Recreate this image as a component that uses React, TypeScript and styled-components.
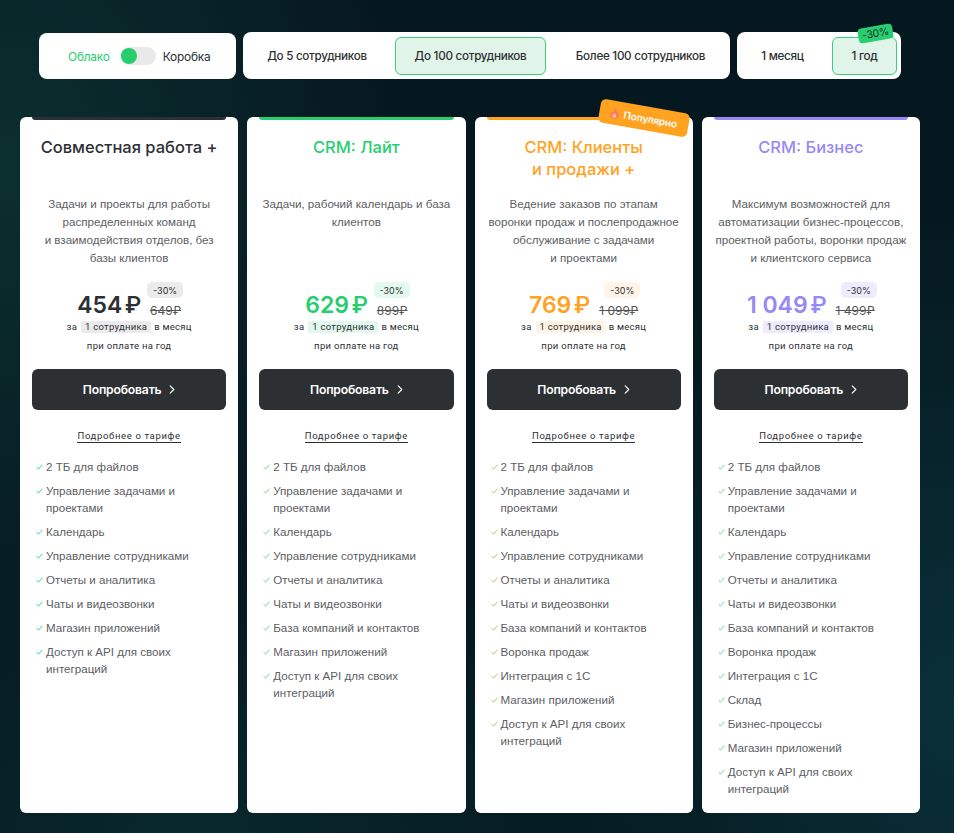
import React from "react";
import styled, { createGlobalStyle } from "styled-components";

const Global = createGlobalStyle`
  html, body { margin: 0; padding: 0; }
  body {
    min-height: 833px;
    overflow: hidden;
    font-family: Inter, "Noto Sans", sans-serif;
    background:
      radial-gradient(ellipse 420px 520px at 0% 20%, #0b2f2f 0%, rgba(11,47,47,0) 100%),
      radial-gradient(ellipse 420px 520px at 100% 85%, #0a3038 0%, rgba(10,48,56,0) 100%),
      radial-gradient(ellipse 500px 300px at 20% 100%, #08282c 0%, rgba(8,40,44,0) 100%),
      #05171f;
  }
`;

const Page = styled.div`
  width: 954px;
  height: 833px;
  box-sizing: border-box;
  padding: 32px 34px 20px 20px;
  display: flex;
  flex-direction: column;
  gap: 38px;
`;

const TopBar = styled.div`
  display: flex;
  justify-content: center;
  align-items: flex-end;
  gap: 7px;
`;

const Panel = styled.div`
  position: relative;
  background: #fff;
  border-radius: 8px;
  display: flex;
  align-items: center;
  height: 47px;
  box-sizing: border-box;
  padding: 0 4px 0 5px;
  gap: 9px;
`;

const HostPanel = styled(Panel)`
  height: 46px;
  width: 197px;
  padding: 0 0 0 29px;
  gap: 0;
`;

const HostLabel = styled.span<{ $on?: boolean }>`
  font-size: 11.9px;
  letter-spacing: -0.2px;
  color: ${(p) => (p.$on ? "#27ce70" : "#2c3033")};
`;

const Toggle = styled.span`
  width: 36px;
  height: 18px;
  margin: 0 7px 0 10px;
  border-radius: 9px;
  background: #e9e9e9;
  display: flex;
  align-items: center;
  padding-left: 1px;
  box-sizing: border-box;
`;

const Knob = styled.span`
  width: 16px;
  height: 16px;
  border-radius: 50%;
  background: #27ce70;
`;

const Tab = styled.div<{ $active?: boolean; $w?: number }>`
  position: relative;
  height: 38px;
  box-sizing: border-box;
  padding: 0 16px;
  width: ${(p) => p.$w}px;
  display: flex;
  align-items: center;
  justify-content: center;
  white-space: nowrap;
  border-radius: 6px;
  font-size: 11.7px;
  letter-spacing: -0.3px;
  font-weight: 500;
  color: #2c3033;
  border: 1px solid ${(p) => (p.$active ? "#38d07f" : "transparent")};
  background: ${(p) => (p.$active ? "#e1f4e9" : "transparent")};
`;

const SaleTag = styled.span`
  position: absolute;
  top: -12px;
  right: 3px;
  width: 35px;
  height: 15px;
  display: flex;
  align-items: center;
  justify-content: center;
  border-radius: 4px;
  background: #27ce70;
  color: #20302a;
  font-size: 10.5px;
  font-weight: 400;
  transform: rotate(-10deg);
`;

const Grid = styled.div`
  display: grid;
  grid-template-columns: repeat(4, 1fr);
  gap: 9px;
  width: 900px;
  height: 696px;
`;

const Card = styled.div`
  position: relative;
  background: #fff;
  border-radius: 6px;
  padding: 0 12px;
  box-sizing: border-box;
  display: flex;
  flex-direction: column;
  align-items: stretch;
`;

const Accent = styled.div<{ $color: string }>`
  height: 3px;
  background: ${(p) => p.$color};
  border-radius: 0 0 3px 3px;
`;

const Title = styled.h2<{ $color: string }>`
  margin: 17px -6px 0;
  height: 54px;
  font-size: 16.5px;
  line-height: 21.5px;
  font-weight: 500;
  text-align: center;
  color: ${(p) => p.$color};
  white-space: pre-line;
`;

const Desc = styled.p`
  margin: 4px -8px 0;
  height: 72px;
  font-family: "Liberation Sans", Arial, sans-serif;
  font-size: 11.6px;
  line-height: 18px;
  color: #5c6063;
  text-align: center;
  white-space: pre;
`;

const PriceRow = styled.div`
  margin-top: 15px;
  height: 36px;
  display: flex;
  justify-content: center;
  align-items: flex-end;
  gap: 9px;
`;

const Price = styled.span<{ $color: string }>`
  font-size: 23px;
  line-height: 32px;
  margin-bottom: -4px;
  font-weight: 600;
  white-space: nowrap;
  color: ${(p) => p.$color};
`;

const Ruble = styled.span`
  font-family: Roboto, sans-serif;
  font-size: 23px;
  font-weight: 500;
  margin-left: 3px;
`;

const Discount = styled.span<{ $bg: string }>`
  position: absolute;
  top: -21px;
  right: -2px;
  width: 36px;
  height: 16px;
  display: flex;
  align-items: center;
  justify-content: center;
  border-radius: 5px;
  font-size: 9px;
  color: #2c3033;
  background: ${(p) => p.$bg};
`;

const OldPrice = styled.span`
  position: relative;
  font-size: 12px;
  line-height: 15px;
  color: #555;
  white-space: nowrap;
`;

const OldValue = styled.span`
  text-decoration: line-through;
`;

const Per = styled.div`
  margin-top: 3px;
  display: flex;
  align-items: center;
  justify-content: center;
  gap: 3px;
  font-family: Roboto, sans-serif;
  font-size: 9.5px;
  line-height: 12px;
  letter-spacing: 0.25px;
  color: #2c3033;
`;

const Count = styled.span<{ $bg: string }>`
  padding: 0 4px;
  margin-left: 1px;
  border-radius: 2px;
  background: ${(p) => p.$bg};
`;

const Note = styled.div`
  margin-top: 7px;
  font-family: Roboto, sans-serif;
  font-size: 9.5px;
  line-height: 12px;
  letter-spacing: 0.3px;
  color: #2c3033;
  text-align: center;
`;

const Cta = styled.div`
  margin-top: 17px;
  height: 41px;
  border-radius: 6px;
  background: #2c3033;
  color: #fff;
  font-size: 12.2px;
  font-weight: 600;
  letter-spacing: -0.2px;
  display: flex;
  align-items: center;
  justify-content: center;
  gap: 8px;
`;

const MoreWrap = styled.div`
  margin-top: 20px;
  display: flex;
  justify-content: center;
`;

const More = styled.span`
  font-family: Roboto, sans-serif;
  font-size: 9.5px;
  line-height: 12px;
  letter-spacing: 0.65px;
  color: #2c3033;
  border-bottom: 1px solid #2c3033;
`;

const Features = styled.ul`
  list-style: none;
  margin: 15px 0 0;
  padding: 0 0 0 4px;
  display: flex;
  flex-direction: column;
  gap: 7px;
`;

const Feature = styled.li`
  display: grid;
  grid-template-columns: 10px 1fr;
  column-gap: 0;
  font-family: "Liberation Sans", Arial, sans-serif;
  font-size: 11.6px;
  line-height: 17px;
  color: #5c6063;
  white-space: pre-line;
`;

const Check = styled.svg`
  width: 7px;
  height: 6px;
  margin-top: 6px;
`;

const Popular = styled.div`
  position: absolute;
  top: -11px;
  right: 4px;
  width: 90px;
  height: 24px;
  display: flex;
  align-items: center;
  justify-content: center;
  gap: 4px;
  border-radius: 5px;
  background: #ffa21f;
  color: #fff;
  font-size: 10px;
  font-weight: 600;
  letter-spacing: -0.1px;
  transform: rotate(10deg);
`;

const base = [
  "2 ТБ для файлов",
  "Управление задачами и\nпроектами",
  "Календарь",
  "Управление сотрудниками",
  "Отчеты и аналитика",
  "Чаты и видеозвонки",
];
const tail = ["Магазин приложений", "Доступ к API для своих\nинтеграций"];
const crm = "База компаний и контактов";

const plans = [
  {
    title: "Совместная работа +",
    color: "#2c3033",
    accent: "#2c3033",
    soft: "#ebebeb",
    desc: "Задачи и проекты для работы\nраспределенных команд\nи взаимодействия отделов, без\nбазы клиентов",
    price: "454",
    old: "649₽",
    check: "#2fd3a0",
    features: [...base, ...tail],
  },
  {
    title: "CRM: Лайт",
    color: "#27ce70",
    accent: "#27ce70",
    soft: "#e4f9ed",
    desc: "Задачи, рабочий календарь и база\nклиентов",
    price: "629",
    old: "899₽",
    check: "#7ccf8e",
    features: [...base, crm, ...tail],
  },
  {
    title: "CRM: Клиенты\nи продажи +",
    color: "#ffa21f",
    accent: "#ffa21f",
    soft: "#fff4e5",
    desc: "Ведение заказов по этапам\nворонки продаж и послепродажное\nобслуживание с задачами\nи проектами",
    price: "769",
    old: "1 099₽",
    check: "#a4c76a",
    popular: true,
    features: [...base, crm, "Воронка продаж", "Интеграция с 1С", ...tail],
  },
  {
    title: "CRM: Бизнес",
    color: "#9689f5",
    accent: "#9689f5",
    soft: "#edebfd",
    desc: "Максимум возможностей для\nавтоматизации бизнес-процессов,\nпроектной работы, воронки продаж\nи клиентского сервиса",
    price: "1\u2005049",
    old: "1 499₽",
    check: "#70d6a5",
    features: [...base, crm, "Воронка продаж", "Интеграция с 1С", "Склад", "Бизнес-процессы", ...tail],
  },
];

const Flame = () => (
  <svg width="9" height="11" viewBox="0 0 9 11" aria-hidden="true">
    <path d="M4.600 0C5 2 8.600 3.600 8.600 7a4.200 4 0 0 1-8.400 0C.2 5.400 1 4.400 1.800 3.600c.2 1 .6 1.500 1.200 1.700C2.900 3.400 3.400 1.400 4.600 0Z" fill="#ff7a59" />
    <path d="M4.500 5.500c.3 1 1.900 1.600 1.900 3.100a2 1.900 0 0 1-3.900 0c0-1.300 1.500-1.800 2-3.100Z" fill="#ffc9a8" />
  </svg>
);

const Chevron = () => (
  <svg width="6" height="9" viewBox="0 0 6 10" aria-hidden="true">
    <path d="M1 1l4 4-4 4" fill="none" stroke="#fff" strokeWidth="1.300" strokeLinecap="round" strokeLinejoin="round" />
  </svg>
);

export default function App() {
  return (
    <Page>
      <Global />
      <TopBar>
        <HostPanel>
          <HostLabel $on>Облако</HostLabel>
          <Toggle>
            <Knob />
          </Toggle>
          <HostLabel>Коробка</HostLabel>
        </HostPanel>
        <Panel>
          <Tab $w={138}>До 5 сотрудников</Tab>
          <Tab $w={151} $active>До 100 сотрудников</Tab>
          <Tab $w={171}>Более 100 сотрудников</Tab>
        </Panel>
        <Panel>
          <Tab $w={81}>1 месяц</Tab>
          <Tab $w={65} $active>
            1 год
            <SaleTag>-30%</SaleTag>
          </Tab>
        </Panel>
      </TopBar>
      <Grid>
        {plans.map((p) => (
          <Card key={p.title}>
            <Accent $color={p.accent} />
            {p.popular && (
              <Popular>
                <Flame />
                Популярно
              </Popular>
            )}
            <Title $color={p.color}>{p.title}</Title>
            <Desc>{p.desc}</Desc>
            <PriceRow>
              <Price $color={p.color}>
                {p.price}
                <Ruble>₽</Ruble>
              </Price>
              <OldPrice>
                <Discount $bg={p.soft}>-30%</Discount>
                <OldValue>{p.old}</OldValue>
              </OldPrice>
            </PriceRow>
            <Per>
              за <Count $bg={p.soft}>1 сотрудника</Count> в месяц
            </Per>
            <Note>при оплате на год</Note>
            <Cta>
              Попробовать
              <Chevron />
            </Cta>
            <MoreWrap>
              <More>Подробнее о тарифе</More>
            </MoreWrap>
            <Features>
              {p.features.map((f) => (
                <Feature key={f}>
                  <Check viewBox="0 0 7 6" aria-hidden="true">
                    <path d="M.6 3.200L2.500 5 6.400.8" fill="none" stroke={p.check} strokeWidth="1" />
                  </Check>
                  <span>{f}</span>
                </Feature>
              ))}
            </Features>
          </Card>
        ))}
      </Grid>
    </Page>
  );
}
